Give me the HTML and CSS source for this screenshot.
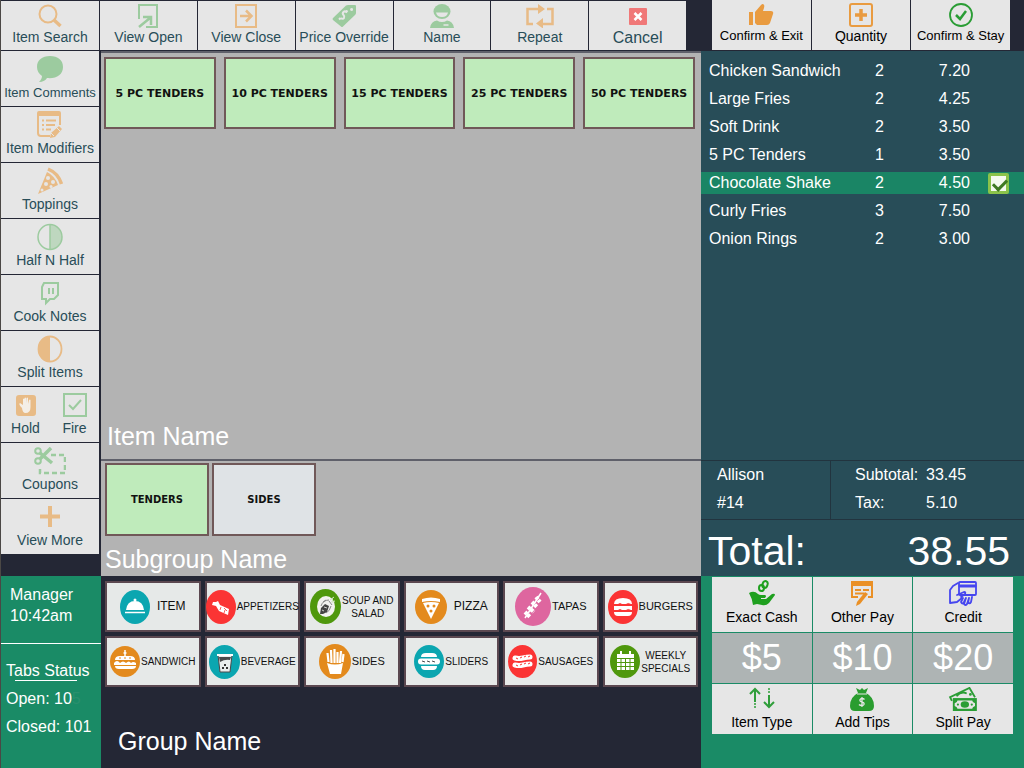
FILE: index.html
```html
<!DOCTYPE html>
<html lang="en">
<head>
    <meta charset="UTF-8">
    <meta name="viewport" content="width=device-width, initial-scale=1.0">
    <link rel="stylesheet" href="styles.css">
    <title>Order Screen</title>
</head>
<body>
    <div class="pos">
        <div class="left">
            <!-- Top toolbar -->
            <div class="toolbar">
                <button class="tool">
                    <svg class="orange" width="24" height="24" viewBox="0 0 24 24"><circle cx="10" cy="10" r="8.500" fill="none" stroke="currentColor" stroke-width="2"/><path d="M16 16l6.500 6" stroke="currentColor" stroke-width="3.500"/></svg>
                    <span>Item Search</span>
                </button>
                <button class="tool">
                    <svg class="green" width="22" height="24" viewBox="0 0 22 24"><path d="M2 15V1h18v22H9" fill="none" stroke="currentColor" stroke-width="2"/><path d="M2 23L13 14M6 13h8v8" fill="none" stroke="currentColor" stroke-width="2.500"/></svg>
                    <span>View Open</span>
                </button>
                <button class="tool">
                    <svg class="orange" width="22" height="24" viewBox="0 0 22 24"><path d="M1 1h20v22H1z" fill="none" stroke="currentColor" stroke-width="2"/><path d="M5 12h12M11 6.500l5.500 5.500-5.500 5.500" fill="none" stroke="currentColor" stroke-width="2.500"/></svg>
                    <span>View Close</span>
                </button>
                <button class="tool">
                    <svg class="green" width="24" height="24" viewBox="0 0 24 24"><path fill-rule="evenodd" d="M1 14L14 1.500Q15 1 16 1h7q1 0 1 1v7q0 1-1 2L11 22.500q-1 1-2 0L1 16q-1-1 0-2zM19.500 4a1.500 1.500 0 1 0 .1 3 1.500 1.500 0 0 0-.1-3z" fill="currentColor"/><path d="M15 8.500q-2-2-3.500-.5t0 3 .5 3-3.500 0M15.500 6.500l-1.500 2M8.500 14l-1.500 1.500" fill="none" stroke="#e6e6e6" stroke-width="2"/></svg>
                    <span>Price Override</span>
                </button>
                <button class="tool">
                    <svg class="green" width="24" height="24" viewBox="0 0 24 24"><ellipse cx="12" cy="7.500" rx="8.500" ry="7.500" fill="currentColor"/><path d="M6 8.500h12q-1 4.500-6 4.500T6 8.500z" fill="#e6e6e6"/><path d="M0 24q1-7 7-7.500 5 3 10 0 6 .5 7 7.500z" fill="currentColor"/><path d="M13.500 21h5" stroke="#e6e6e6" stroke-width="1.500"/></svg>
                    <span>Name</span>
                </button>
                <button class="tool">
                    <svg class="orange" width="28" height="24" viewBox="0 0 28 24"><path d="M7 20H1.500V5H12M21 5h5.500v15H16" fill="none" stroke="currentColor" stroke-width="2.500"/><path d="M12 0l7 5-7 5zM17 14l-7 5.500 7 5z" fill="currentColor"/></svg>
                    <span>Repeat</span>
                </button>
                <button class="tool cancel">
                    <svg width="20" height="24" viewBox="0 0 20 24"><rect x="1" y="4" width="18" height="17" rx="1" fill="#f07878"/><path d="M6.500 9l7 7M13.500 9l-7 7" stroke="#fff" stroke-width="2.500"/></svg>
                    <span>Cancel</span>
                </button>
            </div>

            <div class="work">
                <!-- Item options down the side -->
                <div class="sidebar">
                    <div class="options">
                        <button class="option comments">
                            <svg class="green" width="28" height="28" viewBox="0 0 28 28"><path d="M14 1C6 1 1 5 1 12c0 4 2 7 5 9 0 2-1 4-3 6 4 0 7-2 8-4 9 1 16-3 16-11C27 5 22 1 14 1z" fill="currentColor"/></svg>
                            <span>Item Comments</span>
                        </button>
                        <button class="option">
                            <svg class="orange" width="26" height="28" viewBox="0 0 26 28"><path d="M13 25H4q-3 0-3-3V2q0-1 1-1h20q1 0 1 1v12" fill="none" stroke="currentColor" stroke-width="2"/><path d="M1 1h22v4H1z" fill="currentColor"/><path d="M5 9.500h2M9 9.500h10M5 14h2M9 14h9M5 18.500h2M9 18.500h5" stroke="currentColor" stroke-width="2"/><path d="M13 27l1-5 8-7 3 3-7 8z" fill="currentColor"/><path d="M19 16l4 4M14 22l3 3" stroke="#e6e6e6"/></svg>
                            <span>Item Modifiers</span>
                        </button>
                        <button class="option">
                            <svg class="orange" width="26" height="28" viewBox="0 0 26 28"><path d="M10 5L1 27l20-9Q18 9 10 5z" fill="currentColor"/><path d="M11 2q10 4 13.500 15" fill="none" stroke="currentColor" stroke-width="3.500"/><g fill="#e6e6e6"><circle cx="11" cy="11" r="2"/><circle cx="16" cy="15" r="2"/><circle cx="9" cy="17" r="2"/><circle cx="14" cy="19.500" r="1.500"/><circle cx="5" cy="23" r="1.500"/></g></svg>
                            <span>Toppings</span>
                        </button>
                        <button class="option">
                            <svg class="green" width="26" height="28" viewBox="0 0 26 28"><ellipse cx="13" cy="14" rx="12" ry="12.500" fill="none" stroke="currentColor" stroke-width="1.500"/><path d="M13 1.500a12 12.500 0 0 1 0 25z" fill="currentColor" opacity=".55"/><path d="M13 1v26" stroke="currentColor" stroke-width="1.500"/></svg>
                            <span>Half N Half</span>
                        </button>
                        <button class="option">
                            <svg class="green" width="20" height="28" viewBox="0 0 20 28"><path d="M4 4h14v12l-4 4h-4l-4 4v-4H2V8z" fill="none" stroke="currentColor" stroke-width="2"/><path d="M9 9v6M13 9v6" stroke="currentColor" stroke-width="2"/></svg>
                            <span>Cook Notes</span>
                        </button>
                        <button class="option">
                            <svg class="orange" width="26" height="28" viewBox="0 0 26 28"><ellipse cx="13" cy="14" rx="11.500" ry="12.500" fill="none" stroke="currentColor" stroke-width="1.800"/><path d="M13 1a12 13 0 0 0 0 26z" fill="currentColor"/></svg>
                            <span>Split Items</span>
                        </button>
                        <div class="pair">
                            <button class="option">
                                <svg class="orange" width="22" height="28" viewBox="0 0 22 28"><rect x="1" y="4" width="20" height="21" rx="3" fill="currentColor"/><path d="M7 17q-4-4-2-5l3 2V8q1-1 1.500 0v4V7q1-1 1.500 0v5l.5-5q1-1 1.500 0v6l1-4q1-1 1.500 0v7q0 6-5 6-3 0-3.500-5z" fill="#f4eee6"/></svg>
                                <span>Hold</span>
                            </button>
                            <button class="option">
                                <svg class="green" width="24" height="28" viewBox="0 0 24 28"><path d="M1 3h22v22H1zM6 14l4 4 8-9" fill="none" stroke="currentColor" stroke-width="2"/></svg>
                                <span>Fire</span>
                            </button>
                        </div>
                        <button class="option">
                            <svg class="green" width="32" height="28" viewBox="0 0 32 28"><g fill="none" stroke="currentColor" stroke-width="2"><circle cx="4" cy="4" r="2.800"/><circle cx="4" cy="14" r="2.800"/><path d="M6 6l12 10M6 12L17 1" stroke-width="3.500"/><path d="M17 8h14v18H6v-6" stroke-width="2.500" stroke-dasharray="5 3"/></g></svg>
                            <span>Coupons</span>
                        </button>
                        <button class="option">
                            <svg class="orange" width="22" height="28" viewBox="0 0 22 28"><path d="M11 3v21M1 13.500h20" stroke="currentColor" stroke-width="4"/></svg>
                            <span>View More</span>
                        </button>
                    </div>

                    <div class="status">
                        <div class="manager">
                            <p>Manager</p>
                            <p>10:42am</p>
                        </div>
                        <div class="tabs">
                            <h2>Tabs Status</h2>
                            <p>Open: 10<span class="faded">5</span></p>
                            <p>Closed: 101</p>
                        </div>
                    </div>
                </div>

                <div class="menu">
                    <div class="items">
                        <div class="item-grid">
                            <button class="item">5 PC TENDERS</button>
                            <button class="item">10 PC TENDERS</button>
                            <button class="item">15 PC TENDERS</button>
                            <button class="item">25 PC TENDERS</button>
                            <button class="item">50 PC TENDERS</button>
                        </div>
                        <h2 class="title">Item Name</h2>
                    </div>

                    <div class="subgroups">
                        <div class="subgroup-row">
                            <button class="item subgroup">TENDERS</button>
                            <button class="item subgroup plain">SIDES</button>
                        </div>
                        <h2 class="title">Subgroup Name</h2>
                    </div>

                    <div class="groups">
                        <div class="group-grid">
                            <button class="group wide">
                                <svg width="30" height="34" viewBox="0 0 30 34"><ellipse cx="15" cy="17" rx="15" ry="17" fill="#0ba6b0"/><path d="M6 20q1-9 9-9t9 9z" fill="#fff"/><circle cx="15" cy="10" r="1.500" fill="#fff"/><path d="M5 22.500h20" stroke="#fff" stroke-width="1.500"/></svg>
                                <span>ITEM</span>
                            </button>
                            <button class="group small">
                                <svg width="30" height="34" viewBox="0 0 30 34"><ellipse cx="15" cy="17" rx="15" ry="17" fill="#fb3434"/><path d="M7 12l3 0 2-1 2 4 9 4-1 6-9-4-3-5-4-1z" fill="#fff"/><path d="M15 17l-1 3M18 18l3 3M19 20l-1 3" stroke="#fb3434" stroke-width=".8"/></svg>
                                <span>APPETIZERS</span>
                            </button>
                            <button class="group small">
                                <svg width="31" height="35" viewBox="0 0 31 35"><ellipse cx="15.500" cy="17.500" rx="15.500" ry="17.500" fill="#4f980d"/><ellipse cx="16" cy="17.500" rx="9" ry="10.500" fill="#f2f2f0"/><path d="M10 25l1-6 4-4 4 2-2 6-4 2z" fill="#444"/><path d="M12 21l2 1M14 18l3 1" stroke="#f2f2f0" stroke-width=".8"/><path d="M11 17q2-6 8-6M13 13l3-2M19 12l3 4M21 17q-1 5-5 7" fill="none" stroke="#888"/><path d="M20 11l4-3M21 13l4-1M22 9l1 5" stroke="#d5e5c6"/></svg>
                                <span>SOUP AND<br>SALAD</span>
                            </button>
                            <button class="group wide">
                                <svg width="32" height="34" viewBox="0 0 32 34"><ellipse cx="16" cy="17" rx="16" ry="17" fill="#e38a1d"/><path d="M7 9q9-3 18 0v3q-9-2-18 0zM8 13q8-2 16 0l-8 16z" fill="#fff"/><g fill="#e38a1d"><circle cx="13" cy="16" r="1.500"/><circle cx="19" cy="16" r="1.500"/><circle cx="16" cy="21" r="1.500"/></g></svg>
                                <span>PIZZA</span>
                            </button>
                            <button class="group">
                                <svg width="36" height="39" viewBox="0 0 36 39"><ellipse cx="18" cy="19.500" rx="18" ry="19.500" fill="#de669f"/><path d="M10 31L26 6" stroke="#fff" stroke-width="1.500"/><path d="M10 25l5 5M13 20l6 5M17 15l5 5M21 10l4 5" stroke="#fff" stroke-width="4" stroke-dasharray="3 .7"/></svg>
                                <span>TAPAS</span>
                            </button>
                            <button class="group">
                                <svg width="30" height="34" viewBox="0 0 30 34"><ellipse cx="15" cy="17" rx="15" ry="17" fill="#fb3434"/><path d="M6 14q0-6 9-6t9 6zM6 16h18v4H6zM6 22h18q0 4-4 4H10q-4 0-4-4z" fill="#fff"/><path d="M6 14.500q2 2 4 0t4 0 4 0 5 0M6 20.500q2 2 4 0t4 0 4 0 5 0" fill="none" stroke="#fb3434"/></svg>
                                <span>BURGERS</span>
                            </button>
                            <button class="group small">
                                <svg width="30" height="31" viewBox="0 0 30 31"><ellipse cx="15" cy="15.500" rx="15" ry="15.500" fill="#e38a1d"/><path d="M5 14q0-4 5-4h10q5 0 5 4zM4 17q3-4 6 0 3-3 6 0 3-3 5 0 2-2 5 0v2H4zM5 20h21q0 3-4 3H9q-4 0-4-3z" fill="#fff"/><path d="M9 12h2M14 12h2M19 12h2" stroke="#e38a1d"/><path d="M15 4v6M13.500 7h3" stroke="#fff" stroke-width="1.500"/></svg>
                                <span>SANDWICH</span>
                            </button>
                            <button class="group small">
                                <svg width="31" height="34" viewBox="0 0 31 34"><ellipse cx="15.500" cy="17" rx="15.500" ry="17" fill="#0ba6b0"/><path d="M9 10h14l-2 17H11z" fill="#e9eded" stroke="#48494b"/><path d="M8 9h16v2H8z" fill="#fff"/><path d="M10 12h12l-1 3q-5-1-10 2z" fill="#48494b"/><path d="M13 22h2v2h-2zM17 22h2v2h-2zM15 19h2v2h-2z" fill="#333"/></svg>
                                <span>BEVERAGE</span>
                            </button>
                            <button class="group">
                                <svg width="32" height="35" viewBox="0 0 32 35"><ellipse cx="16" cy="17.500" rx="16" ry="17.500" fill="#e38a1d"/><path d="M8 19q8 3 16 0l-2 11H11z" fill="#fff"/><path d="M9.500 18L8.500 9M12.500 19L12 6M15.500 19V5M18.500 19V8M21 19l1-12M23.500 18l1-8" stroke="#fff" stroke-width="2.200"/></svg>
                                <span>SIDES</span>
                            </button>
                            <button class="group small">
                                <svg width="30" height="33" viewBox="0 0 30 33"><ellipse cx="15" cy="16.500" rx="15" ry="16.500" fill="#0ba6b0"/><path d="M7 12q0-4 5-4h6q5 0 5 4zM7 21h16q0 4-4 4h-8q-4 0-4-4z" fill="#fff"/><rect x="4" y="13.500" width="22" height="6" rx="3" fill="#fff"/><path d="M8 16l3 1M13 16l3 1M18 16l3 1" stroke="#48494b"/></svg>
                                <span>SLIDERS</span>
                            </button>
                            <button class="group small">
                                <svg width="29" height="33" viewBox="0 0 29 33"><ellipse cx="14.500" cy="16.500" rx="14.500" ry="16.500" fill="#fb3434"/><path d="M7 13q4 1 8 0t7-1M7 20q4 1 8 0t7-1" fill="none" stroke="#fff" stroke-width="5" stroke-linecap="round"/><path d="M8 13l2 1M12 13l2-1M16 12l2-1M20 12l2-1M8 20l2 1M12 20l2-1M16 19l2-1M20 19l2-1" stroke="#fb3434"/></svg>
                                <span>SAUSAGES</span>
                            </button>
                            <button class="group small">
                                <svg width="30" height="33" viewBox="0 0 30 33"><ellipse cx="15" cy="16.500" rx="15" ry="16.500" fill="#4f980d"/><path d="M7 9h17v4H7zM10 6h2v4h-2zM19 6h2v4h-2zM7 14h17v11H7z" fill="#fff"/><path d="M7 17.500h17M7 21.500h17M11 14v11M15.500 14v11M20 14v11" stroke="#4f980d"/></svg>
                                <span>WEEKLY<br>SPECIALS</span>
                            </button>
                        </div>
                        <h2 class="title">Group Name</h2>
                    </div>
                </div>
            </div>
        </div>

        <div class="right">
            <div class="confirm">
                <button class="action">
                    <svg width="26" height="24" viewBox="0 0 26 24"><path d="M1 9h4v13H1zM7 9l6-7q2-2 3 0 1 1-1 6h8q3 0 2 3l-3 9q-1 2-3 2H9l-2-2z" fill="#e99b40"/></svg>
                    <span>Confirm &amp; Exit</span>
                </button>
                <button class="action quantity">
                    <svg width="24" height="24" viewBox="0 0 24 24"><rect x="1" y="1" width="22" height="22" rx="2" fill="none" stroke="#e99b40" stroke-width="2"/><path d="M12 6v12M6 12h12" stroke="#e99b40" stroke-width="3.500"/></svg>
                    <span>Quantity</span>
                </button>
                <button class="action">
                    <svg width="24" height="24" viewBox="0 0 24 24"><circle cx="12" cy="12" r="11" fill="none" stroke="#2a9d35" stroke-width="1.800"/><path d="M7 12l4 4 6-8" fill="none" stroke="#2a9d35" stroke-width="2.500"/></svg>
                    <span>Confirm &amp; Stay</span>
                </button>
            </div>

            <!-- Current order -->
            <div class="order">
                <table class="lines">
                    <tr><td class="name">Chicken Sandwich</td><td class="qty">2</td><td class="price">7.20</td><td class="mark"></td></tr>
                    <tr><td class="name">Large Fries</td><td class="qty">2</td><td class="price">4.25</td><td class="mark"></td></tr>
                    <tr><td class="name">Soft Drink</td><td class="qty">2</td><td class="price">3.50</td><td class="mark"></td></tr>
                    <tr><td class="name">5 PC Tenders</td><td class="qty">1</td><td class="price">3.50</td><td class="mark"></td></tr>
                    <tr class="selected"><td class="name"><label for="shake">Chocolate Shake</label></td><td class="qty">2</td><td class="price">4.50</td><td class="mark"><input type="checkbox" id="shake" checked></td></tr>
                    <tr><td class="name">Curly Fries</td><td class="qty">3</td><td class="price">7.50</td><td class="mark"></td></tr>
                    <tr><td class="name">Onion Rings</td><td class="qty">2</td><td class="price">3.00</td><td class="mark"></td></tr>
                </table>
            </div>
            <div class="summary">
                <div class="server">
                    <p>Allison</p>
                    <p>#14</p>
                </div>
                <div class="sums">
                    <p><span>Subtotal:</span><span>33.45</span></p>
                    <p><span>Tax:</span><span>5.10</span></p>
                </div>
            </div>
            <div class="total"><span>Total:</span><span>38.55</span></div>

            <!-- Payment buttons -->
            <div class="payments">
                <button class="pay">
                    <svg width="26" height="26" viewBox="0 0 26 26"><g fill="none" stroke="#1fa01f" stroke-width="2"><ellipse cx="16" cy="4.500" rx="2.500" ry="3.500" transform="rotate(20 16 4.500)"/><ellipse cx="12.500" cy="8" rx="2.500" ry="3"/></g><path d="M0 13q5-3 9 1 1 1 3 1h4q2 1 0 3h-4v1h5l6-5q3-1 3 1l-6 8q-3 3-7 2l-5-1-4 1q-1-7-4-12z" fill="#1fa01f"/></svg>
                    <span>Exact Cash</span>
                </button>
                <button class="pay">
                    <svg width="24" height="26" viewBox="0 0 24 26"><path d="M8 17H2V2h20v15h-4" fill="none" stroke="#ea9026" stroke-width="2"/><path d="M1 1h22v5H1z" fill="#ea9026"/><path d="M5 10h6M13 10h6M5 13.500h9" stroke="#ea9026" stroke-width="1.800"/><path d="M6 26l1-4 8-10 3 2-8 10z" fill="#ea9026"/></svg>
                    <span>Other Pay</span>
                </button>
                <button class="pay">
                    <svg width="28" height="26" viewBox="0 0 28 26"><g fill="none" stroke="#4646ef" stroke-width="1.800" stroke-linejoin="round" stroke-linecap="round"><rect x="10" y="2" width="17" height="13" rx="1"/><path d="M11 6h15" stroke-width="3"/><path d="M9 3L4 6 1 10v13l7-1 5-4M8 15l7-3q2 0 1 2l-4 3"/><path d="M14 18l-2 4q1 3 3 0l2-4M17 18l-2 6q2 2 3 0l2-6M20 18l-1 5q2 1 3-1l1-5"/></g></svg>
                    <span>Credit</span>
                </button>
                <button class="pay cash">$5</button>
                <button class="pay cash">$10</button>
                <button class="pay cash">$20</button>
                <button class="pay">
                    <svg width="26" height="24" viewBox="0 0 26 24"><g fill="none" stroke="#2f9e3a" stroke-width="2"><path d="M6 15V2M1 7l5-5 5 5"/><path d="M20 8v12M15 15l5 5 5-5"/></g><path d="M5 17h2M5 20h2M19 2h2M19 5h2" stroke="#2f9e3a" stroke-width="1.500"/></svg>
                    <span>Item Type</span>
                </button>
                <button class="pay">
                    <svg width="26" height="24" viewBox="0 0 26 24"><path d="M9 6L7 1l4 2 2-2 2 2 4-2-2 5q8 4 8 13 0 5-5 5H6q-5 0-5-5Q1 10 9 6z" fill="#2a9d2f"/><path d="M8 7h10" stroke="#e6e6e6"/><path d="M15.500 12.500q-1-1-2.500-1t-2.200 1.500q0 1.500 2.200 2t2.200 2q-.2 1.500-2.200 1.500t-3-1M13 10v10" fill="none" stroke="#e6e6e6" stroke-width="1.300"/></svg>
                    <span>Add Tips</span>
                </button>
                <button class="pay">
                    <svg width="30" height="24" viewBox="0 0 30 26"><g fill="none" stroke="#2a9d35" stroke-width="2"><path d="M3 15L1 11 22 1l6 10"/><path d="M8 10q5-6 11-3"/></g><rect x="4" y="12" width="26" height="14" fill="#2a9d35"/><path d="M9 14.500h16q0 2 3 3v3q-3 1-3 3H9q0-2-3-3v-3q3-1 3-3z" fill="#e6e6e6"/><ellipse cx="17" cy="19" rx="4.500" ry="3.500" fill="#2a9d35"/><circle cx="9.500" cy="19" r="1.200" fill="#2a9d35"/><circle cx="24.500" cy="19" r="1.200" fill="#2a9d35"/><circle cx="23" cy="8" r="1.500" fill="#2a9d35"/></svg>
                    <span>Split Pay</span>
                </button>
            </div>
        </div>
    </div>
</body>
</html>
```
FILE: styles.css
```css
* {
    box-sizing: border-box;
}

body, h2, p {
    margin: 0;
    padding: 0;
    font-weight: normal;
}

body {
    background-color: #242735;
    font-family: "Liberation Sans", Arial, sans-serif;
    font-size: 16px;
    color: #fff;
}

button {
    margin: 0;
    padding: 0;
    border: none;
    border-radius: 0;
    background-color: #e6e6e6;
    font-family: inherit;
    white-space: nowrap;
    cursor: pointer;
}

svg {
    display: block;
    flex-shrink: 0;
}

.orange {
    color: #e8bb86;
}

.green {
    color: #9ccb9f;
}

/* Page columns */
.pos {
    display: flex;
    min-height: 100vh;
}

.left {
    flex: 1;
    display: flex;
    flex-direction: column;
    border-left: 1px solid #4b4845;
}

.right {
    width: 323px;
    display: flex;
    flex-direction: column;
}

/* Top toolbar */
.toolbar {
    display: grid;
    grid-template-columns: 98px repeat(6, 1fr);
    gap: 1px;
    height: 51px;
    padding: 1px 15px 1px 0;
}

.tool, .option, .action, .pay {
    display: flex;
    flex-direction: column;
    align-items: center;
    justify-content: flex-start;
    min-width: 0;
}

.tool {
    padding-top: 3px;
    font-size: 14px;
    line-height: 19px;
    color: #284d58;
}

.cancel {
    font-size: 16px;
}

/* Side options */
.work {
    flex: 1;
    display: flex;
}

.sidebar {
    width: 100px;
    display: flex;
    flex-direction: column;
}

.options {
    flex: 1;
    display: flex;
    flex-direction: column;
    gap: 1px;
    padding-right: 2px;
}

.option {
    height: 55px;
    padding-top: 4px;
    font-size: 14px;
    line-height: 19px;
    color: #284d58;
}

.comments {
    font-size: 13px;
}

.pair {
    display: grid;
    grid-template-columns: 1fr 1fr;
}

/* Manager and tabs */
.status {
    height: 192px;
    background-color: #1a8b66;
}

.manager {
    height: 68px;
    padding: 8px 0 0 9px;
    border-bottom: 1px solid #fff;
    line-height: 21px;
}

.tabs {
    padding: 17px 0 0 5px;
    line-height: 28px;
}

.tabs h2 {
    font-size: 16px;
    line-height: 20px;
}

.tabs h2::after {
    content: "";
    display: block;
    width: 62px;
    height: 1px;
    margin: -1px 0 4px 9px;
    background-color: #fff;
}

.faded {
    color: #2a8f6d;
}

/* Menu panels */
.menu {
    flex: 1;
    display: flex;
    flex-direction: column;
}

.title {
    font-size: 25px;
    line-height: 30px;
}

.items {
    flex: 1;
    display: flex;
    flex-direction: column;
    justify-content: space-between;
    padding: 4px 6px 8px 3px;
    border-top: 2px solid #5f606a;
    border-bottom: 2px solid #5f606a;
    background-color: #b3b3b3;
}

.items .title {
    padding-left: 3px;
}

.item-grid {
    display: grid;
    grid-template-columns: repeat(5, 1fr);
    gap: 8px;
}

.item {
    height: 72px;
    border: 2px solid #705858;
    background-color: #bfebbb;
    font-family: "DejaVu Sans", sans-serif;
    font-size: 11px;
    font-weight: bold;
    color: #111;
}

.subgroups {
    height: 115px;
    padding: 2px 4px 0 4px;
    background-color: #b3b3b3;
}

.subgroup-row {
    display: flex;
    gap: 3px;
    margin-bottom: 8px;
}

.subgroup {
    width: 104px;
    height: 73px;
    font-size: 10px;
}

.plain {
    background-color: #dfe3e6;
}

.groups {
    height: 192px;
    padding: 5px 3px 0 4px;
}

.group-grid {
    display: grid;
    grid-template-columns: repeat(6, minmax(0, 1fr));
    gap: 4px;
}

.group {
    display: flex;
    align-items: center;
    justify-content: center;
    gap: 1px;
    height: 51px;
    border: 2px solid #5b4850;
    background-color: #e6e9e8;
    font-size: 11px;
    line-height: 13px;
    color: #111;
}

.wide {
    gap: 7px;
    font-size: 12px;
}

.small {
    font-size: 10px;
}

.groups .title {
    padding: 39px 0 0 13px;
}

/* Confirm buttons */
.confirm {
    display: grid;
    grid-template-columns: repeat(3, 1fr);
    gap: 1px;
    height: 51px;
    padding: 0 14px 1px 11px;
}

.action {
    padding-top: 3px;
    font-size: 13px;
    line-height: 18px;
    color: #000;
}

.quantity {
    font-size: 14px;
}

/* Order list */
.order {
    flex: 1;
    padding-top: 3px;
    background-color: #284d58;
}

.lines {
    width: 100%;
    border-spacing: 0 6px;
    table-layout: fixed;
}

.lines td {
    height: 22px;
    padding: 0;
    line-height: 20px;
}

.lines .name {
    padding-left: 8px;
}

.qty {
    width: 50px;
    text-align: left;
}

.price {
    width: 48px;
    text-align: right;
}

.mark {
    width: 53px;
}

.lines .qty {
    padding-left: 2px;
}

.lines .price {
    padding-right: 1px;
}

.lines .mark {
    padding-left: 17px;
}

.selected {
    background-color: #1a8565;
}

.mark input {
    appearance: none;
    display: block;
    width: 21px;
    height: 21px;
    margin: 0;
    border: 3px solid #8bc34a;
    border-radius: 2px;
    background-color: #f5faee;
}

.mark input:checked::before {
    content: "";
    display: block;
    width: 11px;
    height: 6px;
    margin: 3px 0 0 2px;
    border-left: 3px solid #3f7a22;
    border-bottom: 3px solid #3f7a22;
    transform: rotate(-45deg);
}

/* Totals */
.summary {
    display: flex;
    height: 60px;
    border-top: 1px solid #22343f;
    border-bottom: 1px solid #22343f;
    background-color: #284d58;
    line-height: 28px;
}

.server {
    width: 130px;
    padding-left: 16px;
    border-right: 1px solid #22343f;
}

.sums {
    padding-left: 24px;
}

.sums p {
    display: grid;
    grid-template-columns: 71px auto;
}

.total {
    display: flex;
    align-items: center;
    justify-content: space-between;
    height: 56px;
    padding: 6px 14px 0 7px;
    background-color: #284d58;
    font-size: 41px;
    line-height: 48px;
}

/* Payments */
.payments {
    display: grid;
    grid-template-columns: repeat(3, 1fr);
    grid-template-rows: 55px 50px 50px;
    gap: 1px;
    height: 192px;
    padding: 1px 11px 0 11px;
    background-color: #1a8b66;
}

.pay {
    gap: 2px;
    padding-top: 3px;
    font-size: 14px;
    line-height: 18px;
    color: #000;
}

.cash {
    justify-content: center;
    padding: 0;
    background-color: #aeb4b4;
    font-size: 36px;
    line-height: 40px;
    color: #fff;
}
```
